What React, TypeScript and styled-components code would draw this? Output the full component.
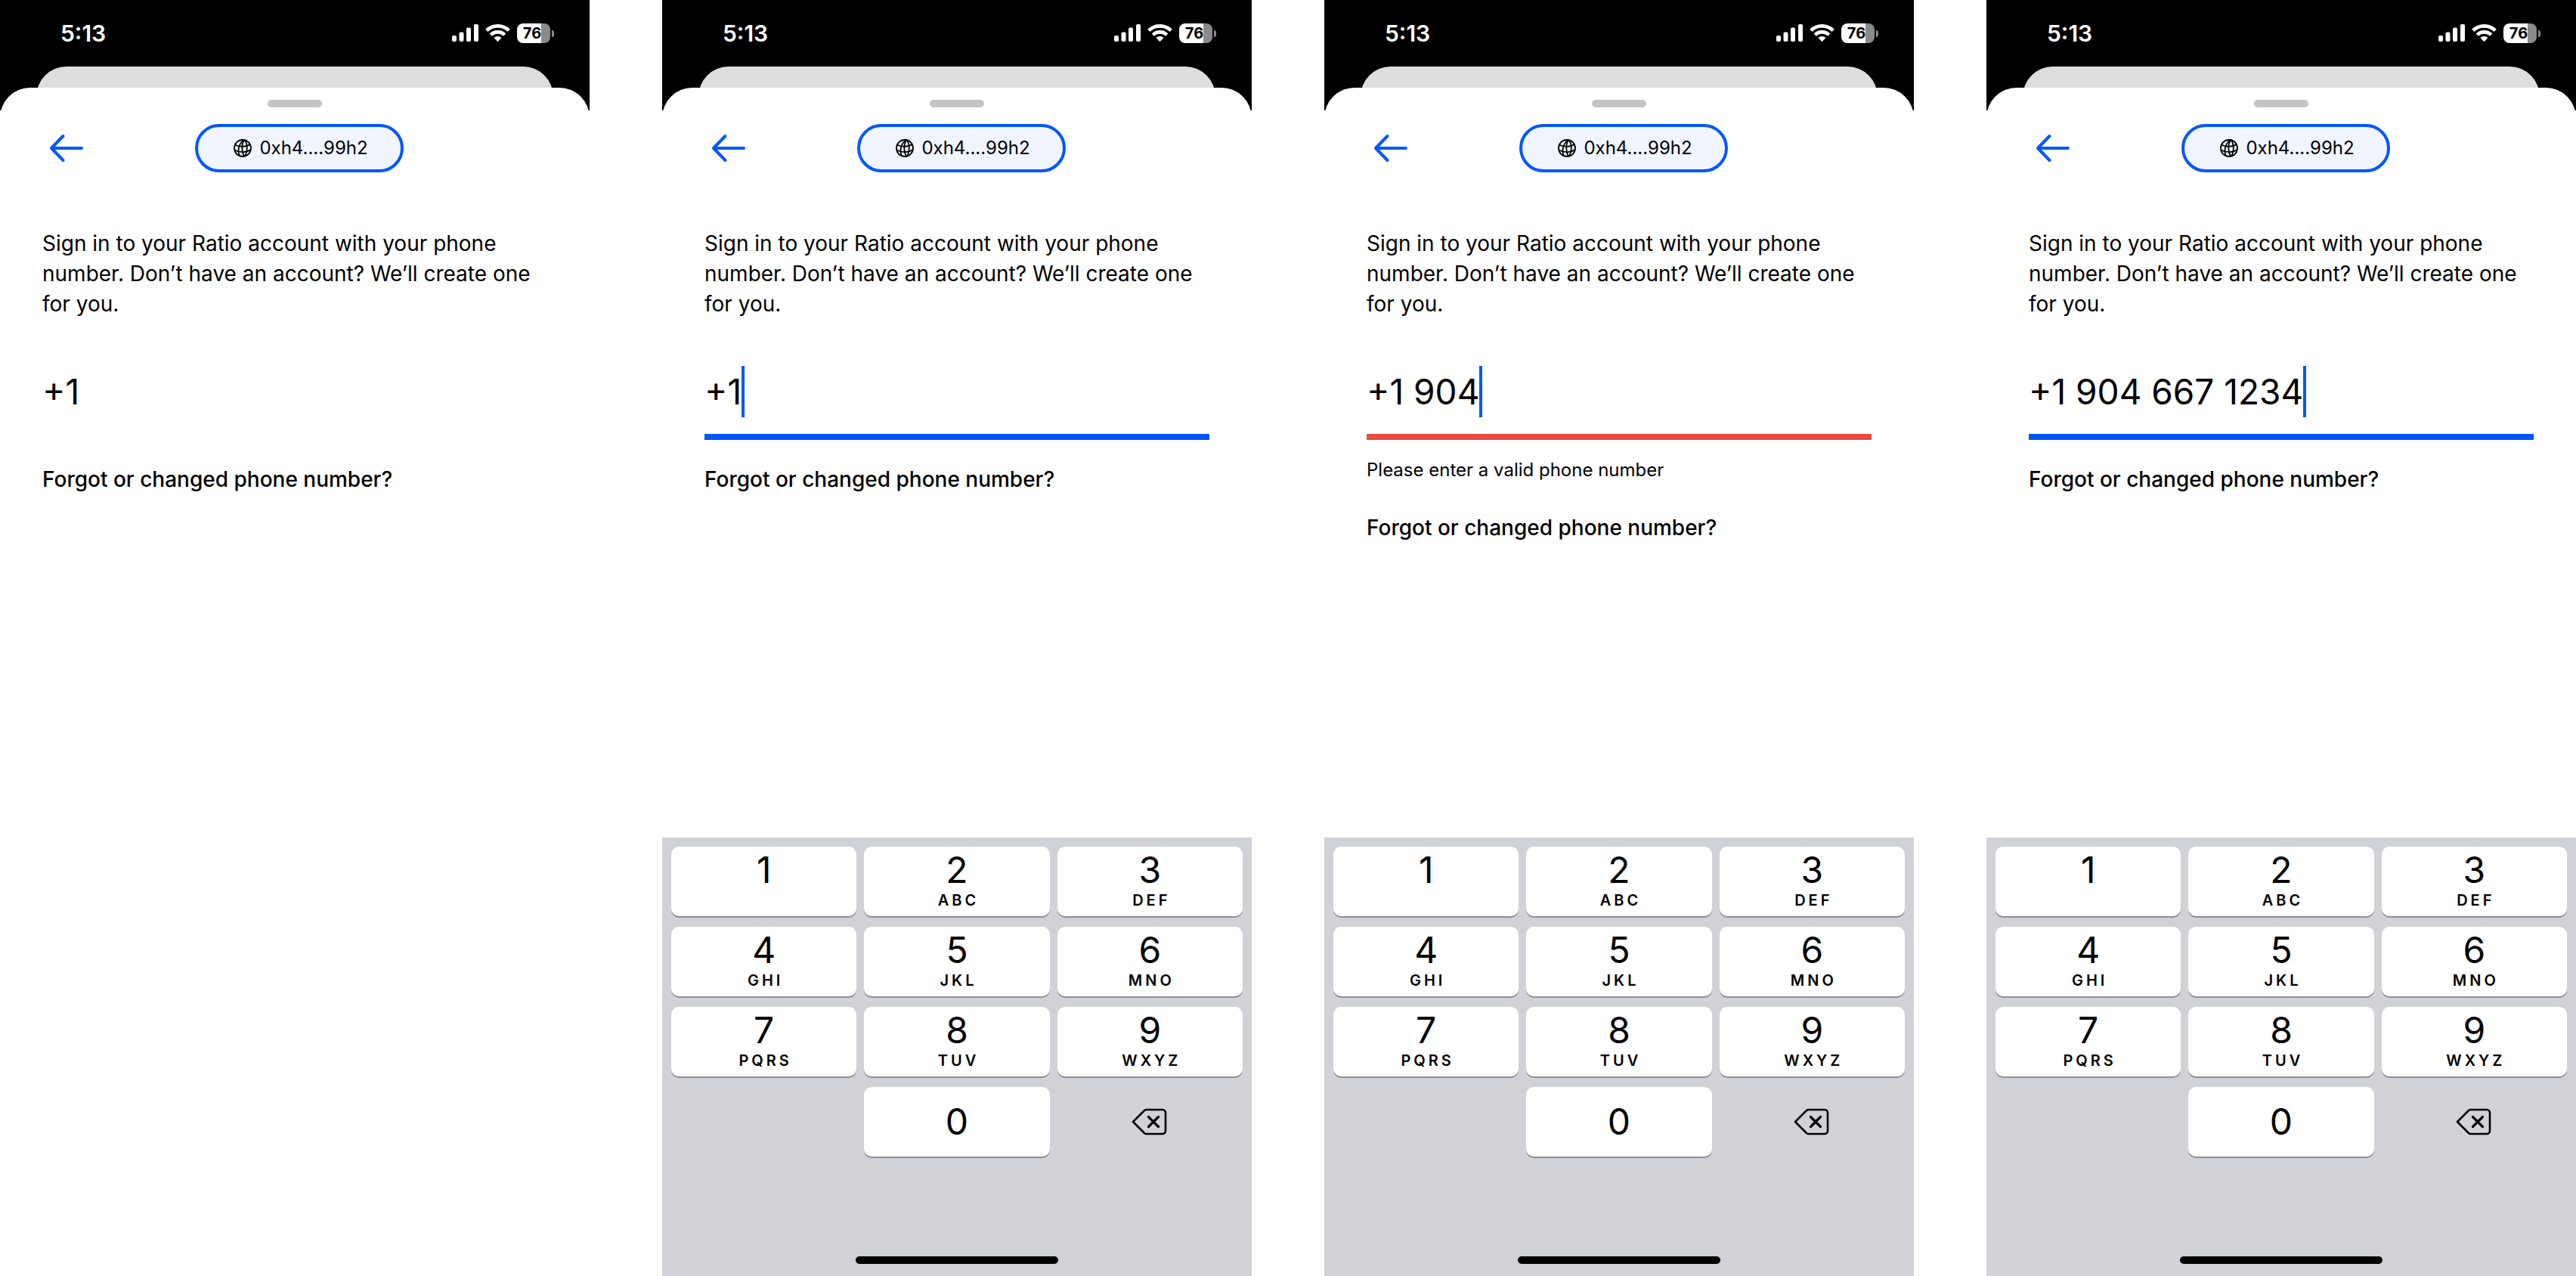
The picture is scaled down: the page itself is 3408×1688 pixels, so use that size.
import React, { useId } from 'react';
import styled, { createGlobalStyle } from 'styled-components';

const BLUE = '#0057ff';
const RED = '#eb4b42';

const GlobalStyle = createGlobalStyle`
  *, *::before, *::after { box-sizing: border-box; }
  body {
    margin: 0;
    background: #fff;
    color: #000;
    font-family: Inter, "Noto Sans", sans-serif;
  }
  button, input { font: inherit; color: inherit; margin: 0; padding: 0; border: 0; background: none; }
  button { cursor: pointer; }
`;

const Board = styled.main`
  display: grid;
  grid-template-columns: repeat(4, minmax(0, 1fr));
  column-gap: 96px;
  min-height: 100vh;
`;

const Phone = styled.section`
  display: flex;
  flex-direction: column;
  min-width: 0;
`;

const Backdrop = styled.div`
  display: flex;
  flex-direction: column;
  background: #000;
`;

const StatusBar = styled.header`
  display: flex;
  justify-content: space-between;
  align-items: center;
  height: 88px;
  padding: 0 47px 0 80px;
  color: #fff;
`;

const Time = styled.time`
  font-size: 30px;
  line-height: 36px;
  font-weight: 600;
`;

const Indicators = styled.div`
  display: flex;
  align-items: center;
  gap: 9px;
`;

const BatteryRow = styled.div`
  display: flex;
  align-items: center;
  gap: 2px;
`;

const BatteryBody = styled.div`
  width: 44px;
  height: 26px;
  padding-right: 4px;
  border-radius: 8px;
  background: linear-gradient(90deg, #fff 32px, #8a8a8a 32px);
  color: #000;
  font-size: 20px;
  line-height: 26px;
  font-weight: 700;
  text-align: center;
`;

const BatteryTip = styled.div`
  width: 3px;
  height: 9px;
  border-radius: 0 3px 3px 0;
  background: #8a8a8a;
`;

const CardBehind = styled.div`
  height: 58px;
  margin: 0 48px;
  border-radius: 40px 40px 0 0;
  background: #dedede;
`;

const Sheet = styled.div`
  display: flex;
  flex-direction: column;
  flex: 1;
  margin-top: -30px;
  padding-top: 16px;
  border-radius: 40px 40px 0 0;
  background: #fff;
`;

const Handle = styled.div`
  align-self: center;
  width: 72px;
  height: 10px;
  border-radius: 5px;
  background: #c4c4c6;
`;

const NavBar = styled.nav`
  display: grid;
  grid-template-columns: 1fr auto 1fr;
  align-items: center;
  margin-top: 22px;
  padding: 0 52px 0 64px;
`;

const BackButton = styled.button`
  display: flex;
  justify-self: start;
`;

const WalletPill = styled.button`
  display: flex;
  justify-content: center;
  align-items: center;
  gap: 10px;
  width: 276px;
  height: 64px;
  padding-left: 4px;
  border: 4px solid ${BLUE};
  border-radius: 32px;
  background: #f0f5ff;
  font-size: 24px;
  line-height: 32px;
`;

const Content = styled.form`
  display: flex;
  flex-direction: column;
  align-items: flex-start;
  padding: 74px 56px 0;
`;

const Intro = styled.label`
  font-size: 28px;
  line-height: 40px;
`;

const Field = styled.div<{ $line: string }>`
  display: flex;
  align-items: center;
  width: 100%;
  height: 120px;
  margin-top: 40px;
  border-bottom: 8px solid ${p => p.$line};
`;

const PhoneInput = styled.input`
  field-sizing: content;
  min-width: 0;
  height: 68px;
  font-size: 46px;
  line-height: 68px;
  outline: none;
`;

const Caret = styled.span`
  width: 4px;
  height: 68px;
  background: ${BLUE};
`;

const ErrorText = styled.p`
  margin: 24px 0 0;
  font-size: 24px;
  line-height: 32px;
`;

const HelpLink = styled.a<{ $afterError: boolean }>`
  margin-top: ${p => (p.$afterError ? 40 : 32)}px;
  color: #000;
  font-size: 28px;
  line-height: 40px;
  font-weight: 500;
  text-decoration: none;
`;

const Keyboard = styled.div`
  display: flex;
  flex-direction: column;
  justify-content: space-between;
  height: 580px;
  margin-top: auto;
  padding: 12px 12px 16px;
  background: #d1d2d8;
`;

const Keys = styled.div`
  display: grid;
  grid-template-columns: repeat(3, 1fr);
  grid-auto-rows: 92px;
  gap: 14px 10px;
`;

const Key = styled.button<{ $plain?: boolean; $center?: boolean }>`
  display: flex;
  flex-direction: column;
  align-items: center;
  justify-content: ${p => (p.$center ? 'center' : 'flex-start')};
  padding-top: ${p => (p.$center ? 0 : 7)}px;
  border-radius: 10px;
  background: ${p => (p.$plain ? 'none' : '#fff')};
  box-shadow: ${p => (p.$plain ? 'none' : '0 2px 0 #8f9095')};
`;

const Digit = styled.span`
  font-size: 48px;
  line-height: 48px;
`;

const Letters = styled.span`
  margin-top: 4px;
  padding-left: 4px;
  font-size: 20px;
  line-height: 24px;
  font-weight: 600;
  letter-spacing: 4px;
`;

const HomeBar = styled.div`
  align-self: center;
  width: 268px;
  height: 10px;
  border-radius: 5px;
  background: #000;
`;

const SignalIcon = () => (
  <svg width="35" height="24" viewBox="0 0 35 24" fill="#fff" aria-hidden="true">
    <rect x="0" y="15" width="6" height="8" rx="2" />
    <rect x="9.5" y="10.5" width="6" height="12.5" rx="2" />
    <rect x="19" y="4.5" width="6" height="18.5" rx="2" />
    <rect x="29" y="0" width="6" height="23" rx="2" />
  </svg>
);

const WifiIcon = () => (
  <svg width="33" height="24" viewBox="0 0 33 24" fill="none" stroke="#fff" strokeWidth="4.6" aria-hidden="true">
    <path d="M1.8 8.4a21 21 0 0 1 29.4 0" />
    <path d="M7.3 14.2a13 13 0 0 1 18.4 0" />
    <path d="M16.5 23.2l-5-5.2a7.2 7.2 0 0 1 10 0z" fill="#fff" stroke="none" />
  </svg>
);

const ArrowIcon = () => (
  <svg width="48" height="40" viewBox="0 0 48 40" fill="none" stroke={BLUE} strokeWidth="4" strokeLinecap="round" strokeLinejoin="round" aria-hidden="true">
    <path d="M44 20H4M19.500 4L4 20l15.500 16" />
  </svg>
);

const GlobeIcon = () => (
  <svg width="24" height="24" viewBox="0 0 24 24" fill="none" stroke="#000" strokeWidth="1.800" aria-hidden="true">
    <circle cx="12" cy="12" r="11" />
    <path d="M14.500 1C8.500 4 4.500 13 7.500 21.500M14.500 1C10 7 10.500 16 14 23M14.500 1C19 7 18.500 16 15.500 22" />
    <path d="M2 7.500c5 3 14 3.500 20-.8M1.500 14.500c6 3.500 15 3.800 21-.5" />
  </svg>
);

const DeleteIcon = () => (
  <svg width="48" height="36" viewBox="0 0 48 36" fill="none" stroke="#000" strokeWidth="2.600" strokeLinecap="round" strokeLinejoin="round" aria-hidden="true">
    <path d="M19 2H41a4 4 0 0 1 4 4V30a4 4 0 0 1-4 4H19a3 3 0 0 1-2-1L2 18 17 3a3 3 0 0 1 2-1z" />
    <path d="M22.500 11.500l13 13M35.500 11.500l-13 13" strokeWidth="3.200" />
  </svg>
);

const KEYS: [string, string][] = [
  ['1', ''], ['2', 'ABC'], ['3', 'DEF'],
  ['4', 'GHI'], ['5', 'JKL'], ['6', 'MNO'],
  ['7', 'PQRS'], ['8', 'TUV'], ['9', 'WXYZ'],
];

const Keypad = () => (
  <Keyboard>
    <Keys>
      {KEYS.map(([digit, letters]) => (
        <Key key={digit} type="button">
          <Digit>{digit}</Digit>
          {letters && <Letters>{letters}</Letters>}
        </Key>
      ))}
      <span />
      <Key type="button" $center><Digit>0</Digit></Key>
      <Key type="button" $center $plain aria-label="Delete"><DeleteIcon /></Key>
    </Keys>
    <HomeBar />
  </Keyboard>
);

type ScreenProps = { value: string; focused?: boolean; error?: string };

const SignInScreen = ({ value, focused = false, error }: ScreenProps) => {
  const id = useId();
  const line = error ? RED : focused ? BLUE : 'transparent';
  return (
    <Phone>
      <Backdrop>
        <StatusBar>
          <Time>5:13</Time>
          <Indicators>
            <SignalIcon />
            <WifiIcon />
            <BatteryRow>
              <BatteryBody>76</BatteryBody>
              <BatteryTip />
            </BatteryRow>
          </Indicators>
        </StatusBar>
        <CardBehind />
      </Backdrop>
      <Sheet>
        <Handle />
        <NavBar>
          <BackButton type="button" aria-label="Back"><ArrowIcon /></BackButton>
          <WalletPill type="button"><GlobeIcon />0xh4....99h2</WalletPill>
        </NavBar>
        <Content>
          <Intro htmlFor={id}>
            Sign in to your Ratio account with your phone number. Don’t have an account? We’ll create one for you.
          </Intro>
          <Field $line={line}>
            <PhoneInput id={id} type="tel" size={value.length} defaultValue={value} />
            {focused && <Caret />}
          </Field>
          {error && <ErrorText>{error}</ErrorText>}
          <HelpLink href="#" $afterError={Boolean(error)}>Forgot or changed phone number?</HelpLink>
        </Content>
        {focused && <Keypad />}
      </Sheet>
    </Phone>
  );
};

export default function App() {
  return (
    <>
      <GlobalStyle />
      <Board>
        <SignInScreen value="+1" />
        <SignInScreen value="+1" focused />
        <SignInScreen value="+1 904" focused error="Please enter a valid phone number" />
        <SignInScreen value="+1 904 667 1234" focused />
      </Board>
    </>
  );
}
